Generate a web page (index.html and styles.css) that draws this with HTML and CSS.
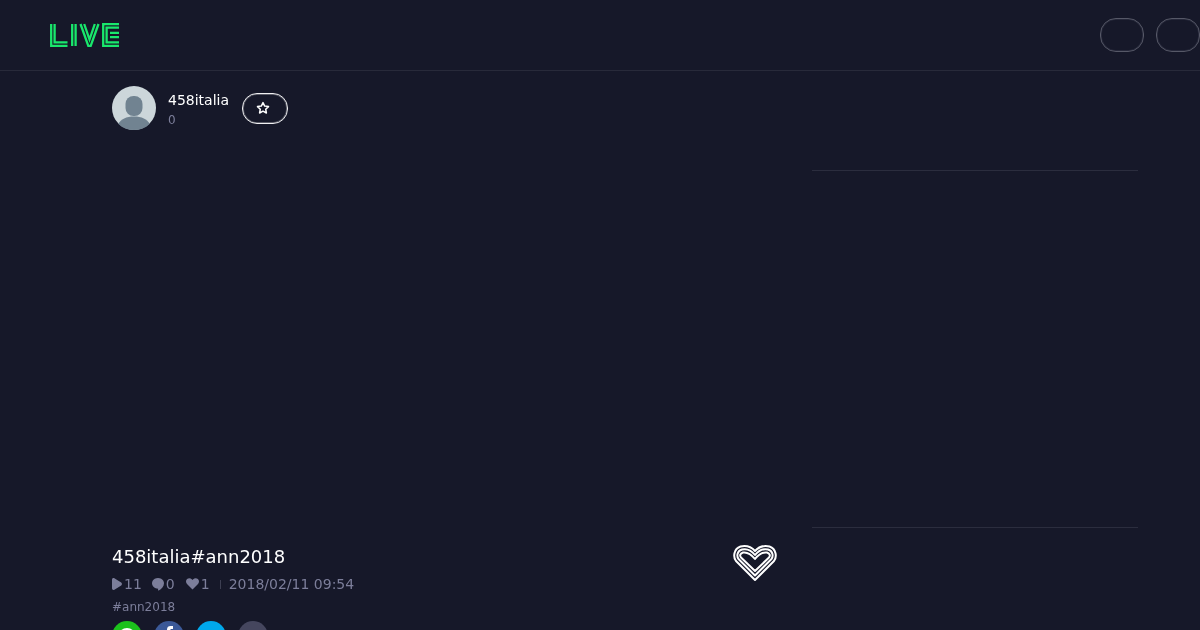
FILE: index.html
```html
<!DOCTYPE html>
<html lang="en">
<head>
    <meta charset="UTF-8">
    <title>458italia#ann2018</title>
    <link rel="stylesheet" href="styles.css">
</head>
<body>
    <header class="topbar">
        <svg class="logo" width="70" height="24" viewBox="0 0 70 24" fill="none" stroke="#19e86c" stroke-width="2.300">
            <path d="M1.200 1v21.800H17.500M4.600 1v18.400h12.900"/>
            <path d="M22.200 1v22M25.600 1v22"/>
            <path d="M30.500 1l7.800 21.800h2.400L48.500 1M34.200 1l5.300 15.500L44.800 1"/>
            <path d="M69 1.200H53.200v21.600H69M69 4.600H56.600v14.800H69M69 9.800H60M69 14.200H60"/>
        </svg>
        <div class="top-buttons">
            <span class="round-btn"></span>
            <span class="round-btn"></span>
        </div>
    </header>

    <div class="content">
        <main class="main-col">
            <div class="channel">
                <svg class="avatar" width="44" height="44" viewBox="0 0 44 44">
                    <circle cx="22" cy="22" r="22" fill="#ccd6da"/>
                    <rect x="13.500" y="10" width="17" height="20" rx="8" fill="#718391"/>
                    <path d="M6.500 38c2-5 8-7.500 15.500-7.500s13.500 2.500 15.500 7.500c-4 4-9 6-15.500 6s-11.500-2-15.500-6z" fill="#718391"/>
                </svg>
                <div class="channel-info">
                    <div class="channel-name">458italia</div>
                    <div class="channel-count">0</div>
                </div>
                <button class="follow-btn">
                    <svg width="14" height="14" viewBox="0 0 14 14" fill="none" stroke="#fff" stroke-width="1.500" stroke-linejoin="round">
                        <path d="M7 1.600l1.700 3.500 3.800.5-2.800 2.600.7 3.800L7 10.200l-3.400 1.800.7-3.800-2.800-2.600 3.800-.5z"/>
                    </svg>
                </button>
            </div>

            <div class="player"></div>

            <div class="video-info">
                <div class="video-text">
                    <h1 class="video-title">458italia#ann2018</h1>
                    <div class="stats">
                        <span class="stat">
                            <svg width="10" height="12" viewBox="0 0 10 12"><path d="M0 1.800C0 .3 1.200-.3 2.400.3l6.800 4.200c1 .6 1 2.400 0 3L2.400 11.700C1.200 12.300 0 11.700 0 10.200z"/></svg>
                            11
                        </span>
                        <span class="stat">
                            <svg width="12" height="13" viewBox="0 0 12 13"><path d="M6 0c3.300 0 6 2.300 6 5.300 0 3.200-2.400 5.700-5.300 7.200-.5.200-.8-.1-.7-.6l.2-1.200C2.700 10.500 0 8.300 0 5.300 0 2.300 2.700 0 6 0z"/></svg>
                            0
                        </span>
                        <span class="stat stat-like">
                            <svg width="13" height="12" viewBox="0 0 13 12"><path d="M6.500 11.500L1 6C-.4 4.500-.3 2.200 1.100 1 2.500-.2 4.600 0 5.800 1.200l.7.8.7-.8C8.400 0 10.500-.2 11.900 1c1.400 1.200 1.500 3.500.1 5z"/></svg>
                            1
                        </span>
                        <span class="stat-sep"></span>
                        <span class="stat-date">2018/02/11 09:54</span>
                    </div>
                    <div class="tags">#ann2018</div>
                    <div class="share">
                        <span class="share-btn share-line">
                            <svg width="30" height="30" viewBox="0 0 30 30"><ellipse cx="15" cy="14" rx="8" ry="7" fill="#fff"/></svg>
                        </span>
                        <span class="share-btn share-fb">
                            <svg width="30" height="30" viewBox="0 0 30 30"><path d="M13 30V14h-2v-3h2V8.500C13 6 14.500 5 16.500 5H19v3h-1.500c-.8 0-1.200.4-1.200 1.200V11H19l-.4 3h-2.300v16z" fill="#fff"/></svg>
                        </span>
                        <span class="share-btn share-tw"></span>
                        <span class="share-btn share-more"></span>
                    </div>
                </div>
                <svg class="like-heart" width="44" height="37" viewBox="0 0 44 37" fill="none" stroke="#fff" stroke-width="2" stroke-linejoin="round">
                    <path d="M22 35L3 16C0 12 .5 4 7.500 1.500 12 .5 18 1.500 22 6c4-4.500 10-5.500 14.500-4.500C43.500 4 44 12 41 16z"/>
                    <path d="M22 30.500L5.500 14C3.500 11 4 6 9 4.500c4-1 9 .5 13 5.500 4-5 9-6.500 13-5.500 5 1.500 5.500 6.500 3.500 9.500z"/>
                    <path d="M22 26L8 12.500C6.500 10.500 7 8.500 10 7.500c3-.5 8 1.500 12 6.500 4-5 9-7 12-6.500 3 1 3.500 3 2 5z"/>
                </svg>
            </div>
        </main>

        <aside class="side-col">
            <div class="side-list"></div>
        </aside>
    </div>
</body>
</html>
```

FILE: styles.css
```css
html, body {
    margin: 0;
    padding: 0;
    height: 630px;
    overflow: hidden;
    background: #161829;
    font-family: "DejaVu Sans", sans-serif;
    color: #fff;
}

/* Header */
.topbar {
    display: flex;
    align-items: center;
    justify-content: space-between;
    box-sizing: border-box;
    height: 71px;
    padding-left: 50px;
    border-bottom: 1px solid #282a3a;
}

.logo {
    display: block;
}

.top-buttons {
    display: flex;
    gap: 12px;
}

.round-btn {
    box-sizing: border-box;
    width: 44px;
    height: 34px;
    border: 1px solid #565867;
    border-radius: 16px;
    box-shadow: inset 0 0 0 1px #26283a;
}

/* Columns */
.content {
    display: flex;
    padding: 0 62px 0 112px;
    will-change: transform;
}

.main-col {
    width: 666px;
    flex-shrink: 0;
}

.side-col {
    margin-left: 34px;
    flex-grow: 1;
    padding-top: 99px;
}

.side-list {
    box-sizing: border-box;
    height: 358px;
    border-top: 1px solid #2b2d3e;
    border-bottom: 1px solid #2b2d3e;
}

/* Channel */
.channel {
    display: flex;
    align-items: center;
    height: 44px;
    margin-top: 15px;
}

.channel-info {
    margin-left: 12px;
    padding-top: 4px;
}

.channel-name {
    font-size: 14px;
    line-height: 20px;
}

.channel-count {
    font-size: 12px;
    line-height: 20px;
    color: #7c7e9a;
}

.follow-btn {
    display: flex;
    align-items: center;
    justify-content: center;
    box-sizing: border-box;
    width: 46px;
    height: 31px;
    margin-left: 13px;
    padding: 0 4px 0 0;
    background: none;
    border: 1px solid #f0f0f2;
    border-radius: 15px;
    box-shadow: inset 0 0 0 1px rgba(255, 255, 255, 0.3);
}

/* Video */
.player {
    height: 413px;
}

.video-info {
    display: flex;
    justify-content: space-between;
    align-items: flex-start;
}

.video-title {
    margin: 0;
    font-size: 18px;
    font-weight: normal;
    line-height: 28px;
}

.stats {
    display: flex;
    align-items: center;
    margin-top: 3px;
    height: 20px;
    font-size: 14px;
    color: #7c7e9a;
}

.stat {
    display: flex;
    align-items: center;
    gap: 2px;
    margin-right: 10px;
}

.stat svg {
    fill: #7c7e9a;
}

.stat-like svg {
    margin-left: 1px;
}

.stat-sep {
    width: 1px;
    height: 9px;
    margin-right: 8px;
    background: #3d3f52;
}

.tags {
    margin-top: 3px;
    font-size: 12px;
    line-height: 20px;
    color: #7c7e9a;
}

.share {
    display: flex;
    gap: 12px;
    margin-top: 4px;
}

.share-btn {
    width: 30px;
    height: 30px;
    border-radius: 50%;
}

.share-btn svg {
    display: block;
}

.share-line { background: #1cc21c; }
.share-fb { background: #3b5998; }
.share-tw { background: #00a8eb; }
.share-more { background: #45465e; }

.like-heart {
    margin: 2px 1px 0 0;
}
```
